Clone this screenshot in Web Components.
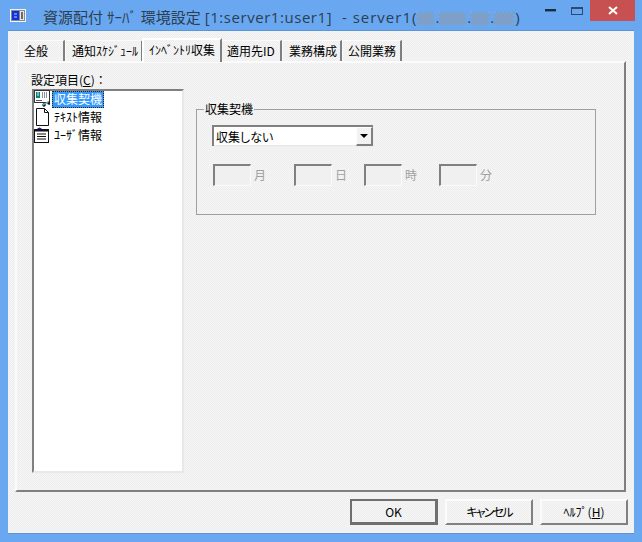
<!DOCTYPE html>
<html lang="ja">
<head>
<meta charset="utf-8">
<title>資源配付</title>
<style>
html, body { margin: 0; padding: 0; background: #69a8f0; }
body { font: 12px/14px "Noto Sans CJK JP", "Liberation Sans", sans-serif; color: #000; }
</style>
</head>
<body>
<app-window>
	<title-bar>
		<span>資源配付 ｻｰﾊﾞ 環境設定 <span style="letter-spacing:.55px">[1:server1:user1]</span><span style="letter-spacing:1px">&nbsp; - server1(</span><ip-blur w="17"></ip-blur>.<ip-blur w="27"></ip-blur>.<ip-blur w="18"></ip-blur>.<ip-blur w="20"></ip-blur>)</span>
	</title-bar>
	<tab-strip>
		<tab-item w="47" pad="5">全般</tab-item>
		<tab-item w="78" pad="6">通知ｽｹｼﾞｭｰﾙ</tab-item>
		<tab-item w="80" pad="5" selected>ｲﾝﾍﾞﾝﾄﾘ収集</tab-item>
		<tab-item w="61" pad="5">適用先ID</tab-item>
		<tab-item w="60" pad="6">業務構成</tab-item>
		<tab-item w="60" pad="5">公開業務</tab-item>
	</tab-strip>
	<tab-page>
		<settings-tree slot="left">
			<tree-row icon="pc" selected>収集契機</tree-row>
			<tree-row icon="doc">ﾃｷｽﾄ情報</tree-row>
			<tree-row icon="list">ﾕｰｻﾞ情報</tree-row>
		</settings-tree>
		<group-box slot="right" label="収集契機">
			<combo-box>収集しない</combo-box>
			<div style="display:flex; margin:18px 0 0 1px">
				<date-field unit="月" w="81"></date-field>
				<date-field unit="日" w="70"></date-field>
				<date-field unit="時" w="75"></date-field>
				<date-field unit="分" w="70"></date-field>
			</div>
		</group-box>
	</tab-page>
	<button-row>
		<push-button default>OK</push-button>
		<push-button><span style="letter-spacing:-1.8px">キャンセル</span></push-button>
		<push-button>ﾍﾙﾌﾟ(<u>H</u>)</push-button>
	</button-row>
</app-window>

<script>
const DITHER = 'repeating-conic-gradient(#f5f5f5 0 25%, #eeeeee 0 50%) 0 0 / 2px 2px';

// small helper so each component stays short
function define(name, css, html, init) {
	customElements.define(name, class extends HTMLElement {
		constructor() {
			super();
			this.attachShadow({ mode: 'open' });
			this.shadowRoot.innerHTML = `<style>${css}</style>${html}`;
		}
		connectedCallback() {
			if (init) init(this, this.shadowRoot);
		}
	});
}

define('app-window', `
	:host { display: flex; flex-direction: column; box-sizing: border-box; width: 642px; height: 542px;
		background: #69a8f0; padding: 0 8px 8px; overflow: hidden; }
	.client { flex: 1; display: flex; flex-direction: column; background: ${DITHER};
		border-top: 1px solid #5a95dc; border-bottom: 1px solid #5a95dc; padding: 7px 8px 0 7px; }
	::slotted(title-bar) { margin: 0 -8px; }
`, `<slot name="bar"></slot><div class="client"><slot></slot></div>`, (el) => {
	el.querySelector('title-bar').slot = 'bar';
});

define('title-bar', `
	:host { display: flex; align-items: flex-start; height: 30px; flex: none; position: relative;
		font: 15px/18px "Open Sans", "Noto Sans CJK JP", sans-serif; color: #2c3e50; }
	.icon { margin: 9px 0 0 10px; flex: none; }
	.text { margin: 8px 0 0 17px; white-space: nowrap; }
	.ctl { margin-left: auto; display: flex; flex: none; padding-right: 7px; }
	.min { width: 26px; height: 21px; display: flex; align-items: center; justify-content: center; }
	.red { width: 45px; height: 21px; background: #c75050; display: flex; align-items: center; justify-content: center; }
`, `
	<svg class="icon" width="16" height="13" viewBox="0 0 16 13">
		<rect width="16" height="13" fill="#f4f4f4"/><rect x="1" y="1" width="14" height="11" fill="#7f8a9c"/>
		<rect x="2" y="2" width="7" height="9" fill="#1232d8"/><rect x="4" y="4" width="3" height="2" fill="#5f86e8"/>
		<rect x="4" y="7" width="3" height="2" fill="#5f86e8"/>
		<rect x="10" y="2" width="4" height="9" fill="#e6e6dc"/><rect x="11" y="3" width="2" height="7" fill="#6a6a6a"/>
	</svg>
	<div class="text"><slot></slot></div>
	<div class="ctl">
		<div class="min"><svg width="12" height="3"><rect y="0" width="11" height="2.4" fill="#1b2a3c"/></svg></div>
		<div class="min" style="align-items:flex-start;padding-top:7px;box-sizing:border-box"><svg width="13" height="9"><rect x=".5" y=".5" width="11" height="7" fill="none" stroke="#2c4a6e"/><rect x="1" y="1" width="10" height="1" fill="#2c4a6e"/></svg></div>
		<div class="red"><svg width="10" height="9" viewBox="0 0 10 9"><path d="M1 1l8 7M9 1L1 8" stroke="#fff" stroke-width="2"/></svg></div>
	</div>
`);

define('ip-blur', `
	:host { display: inline-block; height: 13px; vertical-align: -2px; opacity: .8; margin-right: 1px;
		background: repeating-conic-gradient(#5f7fa8 0 25%, #a9bdd6 0 50%) 0 0 / 4px 4px; filter: blur(.8px); }
`, ``, (el) => { el.style.width = (el.getAttribute('w') || 18) + 'px'; });

define('tab-strip', `
	:host { display: flex; align-items: flex-end; height: 24px; flex: none; position: relative; z-index: 1;
		margin-bottom: -1px; padding-left: 3px; }
`, `<slot></slot>`);

define('tab-item', `
	:host { display: flex; align-items: center; box-sizing: border-box; height: 21px; padding-bottom: 1px; flex: none;
		background: ${DITHER}; border-top: 1px solid #fbfbfb; border-left: 1px solid #fbfbfb; border-right: 2px solid #7f7f7f;
		white-space: nowrap; margin-bottom: 1px; font-size: 12px; }
	:host([selected]) { height: 24px; margin: 0 -1px 0; padding-bottom: 3px; border-top: 2px solid #fff; border-left: 2px solid #fff; z-index: 2; position: relative; }
`, `<slot></slot>`, (el) => {
	el.style.width = el.getAttribute('w') + 'px';
	el.style.paddingLeft = el.getAttribute('pad') + 'px';
});

define('tab-page', `
	:host { display: grid; grid-template-columns: 152px 1fr; grid-template-rows: 16px 1fr; column-gap: 12px; box-sizing: border-box; height: 431px; flex: none;
		background: ${DITHER}; border-top: 2px solid #fbfbfb; border-left: 2px solid #fbfbfb;
		border-right: 2px solid #7f7f7f; border-bottom: 2px solid #7f7f7f; padding: 10px 28px 0 15px; }
	.label { grid-column: 1; line-height: 14px; margin-left: -1px; white-space: nowrap; font-size: 12px; }
	.right { grid-column: 2; grid-row: 1 / span 2; padding-top: 29px; }
`, `
	<div class="label">設定項目(<u>C</u>)：</div>
	<div class="right"><slot name="right"></slot></div>
	<slot name="left"></slot>
`);

define('settings-tree', `
	:host { display: block; box-sizing: border-box; height: 384px; background: #fff;
		border-top: 2px solid #808080; border-left: 2px solid #808080;
		border-right: 2px solid #e8e8e8; border-bottom: 2px solid #e8e8e8; }
	::slotted(tree-row:first-child) { margin-top: -1px; }
`, `<slot></slot>`);

const TREE_ICONS = {
	pc: `<rect x=".5" y=".5" width="15" height="12" fill="#fff" stroke="#333"/><rect x="2" y="2" width="4" height="6" fill="#0f7d80"/><path d="M3 3h2M3 5h2" stroke="#bfe"/><path d="M8 3h1M10 3h1M12 3h1M8 5h1M10 5h1M12 5h1M8 7h1M10 7h1M12 7h1" stroke="#223"/><path d="M2 10.5h6" stroke="#555"/><circle cx="10" cy="15" r="1.8" fill="#111"/><circle cx="15" cy="13" r="1.8" fill="#111"/><path d="M8 15.5l7-4" stroke="#7ab" stroke-width="1.4"/>`,
	doc: `<path d="M2.5 .5h8l4 4v13h-12z" fill="#fff" stroke="#111"/><path d="M10.500 .5v4h4" fill="none" stroke="#111"/>`,
	list: `<path d="M3 3q2.500-3 5 0z" fill="#1515c8"/><rect x=".5" y="3.500" width="14" height="13" fill="#fff" stroke="#111"/><path d="M1 4h13v1.500H1z" fill="#111"/><path d="M3 8h9M3 10.500h9M3 13h9" stroke="#111"/>`
};
define('tree-row', `
	:host { display: flex; align-items: center; height: 18px; white-space: nowrap; }
	svg { flex: none; width: 16px; height: 18px; margin-right: 2px; }
	.t { padding: 0 1px; height: 15px; line-height: 14px; border: 1px solid transparent; font-size: 12px; }
	:host([selected]) .t { background: #3399ff; color: #fff; border: 1px dotted #402000; }
`, `<svg viewBox="0 0 16 18"></svg><span class="t"><slot></slot></span>`, (el, root) => {
	root.querySelector('svg').innerHTML = TREE_ICONS[el.getAttribute('icon')];
});

define('group-box', `
	:host { display: block; }
	fieldset { margin: 0; padding: 9px 0 0 15px; height: 102px; box-sizing: content-box; border: 1px solid #a0a0a0; }
	legend { padding: 0 1px; font-size: 12px; line-height: 14px; margin-left: -8px; }
`, `<fieldset><legend></legend><slot></slot></fieldset>`, (el, root) => {
	root.querySelector('legend').textContent = el.getAttribute('label');
});

define('combo-box', `
	:host { display: flex; box-sizing: border-box; width: 161px; height: 21px;
		border-top: 2px solid #808080; border-left: 2px solid #808080; box-shadow: 1px 1px 0 #eee; }
	.v { flex: 1; padding: 2px 0 0 2px; line-height: 15px; font-size: 12px; background: #fff; border-bottom: 1px solid #e8e8e8; font-feature-settings: "palt"; }
	.b { width: 17px; box-sizing: border-box; background: #f2f2f2; border-top: 1px solid #fff; border-left: 1px solid #fff;
		border-right: 2px solid #808080; border-bottom: 2px solid #808080; display: flex; align-items: center; justify-content: center; }
	.b i { width: 0; height: 0; border: 4px solid transparent; border-top: 4px solid #000; border-bottom: 0; }
`, `<div class="v"><slot></slot></div><div class="b"><i></i></div>`);

define('date-field', `
	:host { display: flex; flex: none; color: #a0a0a0; }
	.in { width: 38px; height: 22px; box-sizing: border-box; background: #f0f0f0;
		border-top: 2px solid #808080; border-left: 2px solid #808080; border-right: 1px solid #fafafa; border-bottom: 1px solid #fafafa; }
	.u { margin: 3px 0 0 3px; line-height: 15px; font-size: 12px; }
`, `<div class="in"></div><div class="u"></div>`, (el, root) => {
	root.querySelector('.u').textContent = el.getAttribute('unit');
	el.style.width = el.getAttribute('w') + 'px';
});

define('button-row', `
	:host { display: flex; justify-content: flex-end; gap: 7px; padding: 7px 0 0; margin-right: -2px; }
`, `<slot></slot>`);

define('push-button', `
	:host { display: flex; align-items: center; justify-content: center; box-sizing: border-box; width: 88px; height: 26px;
		background: ${DITHER}; border-top: 2px solid #fbfbfb; border-left: 2px solid #fbfbfb;
		border-right: 2px solid #808080; border-bottom: 2px solid #808080; font-size: 12px; white-space: nowrap; font-feature-settings: "palt"; }
	:host([default]) { border: 2px solid #6f6f6f; border-right-width: 3px; border-bottom-width: 3px; }
`, `<slot></slot>`);
</script>
</body>
</html>
